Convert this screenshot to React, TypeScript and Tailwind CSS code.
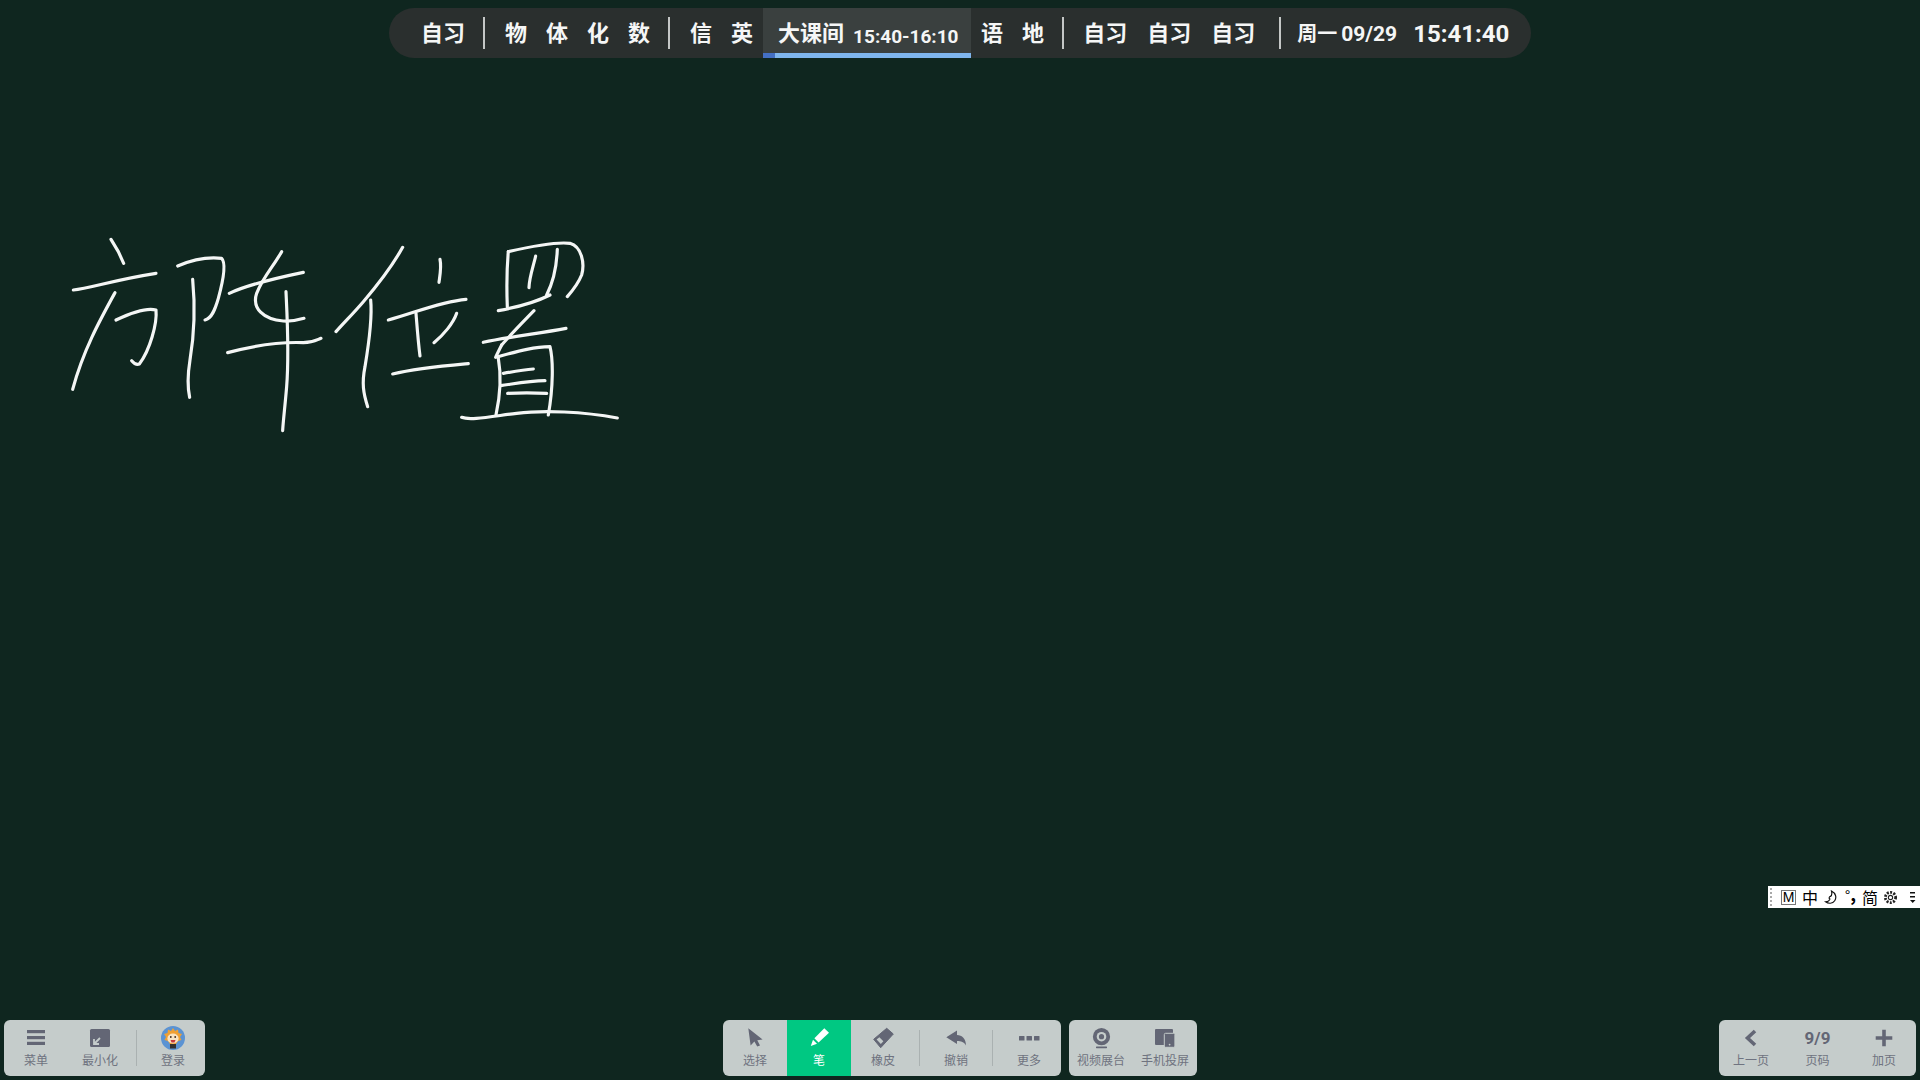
import type { ReactNode } from 'react'

const CJK = "font-['Roboto','Noto_Sans_CJK_SC',sans-serif]"
const INK = '#636675'

const strokes = [
  // 方
  'M183 58 L205 95 L221 130',
  'M70 210 C120 205 190 180 318 160',
  'M195 218 C150 300 100 390 68 508',
  'M198 300 C240 280 290 262 318 270 C322 310 300 390 268 432 C258 436 250 428 245 422',
  // 阵
  'M383 138 C420 122 470 110 515 115 C530 130 520 180 505 235 C495 270 485 295 465 300',
  'M428 178 C435 250 435 330 420 420 C412 470 412 500 419 532',
  'M695 95 C670 140 640 170 620 220 C605 265 640 298 700 303 C725 305 745 300 762 295',
  'M538 220 C580 200 650 180 760 157',
  'M533 398 C600 380 680 365 760 368 C790 368 800 360 813 355',
  'M708 215 C712 300 718 400 710 500 C705 560 700 600 698 632',
]

const strokes2 = [
  // 位
  'M218 82 C180 150 130 210 100 245 C70 280 40 310 18 335',
  'M122 240 C128 300 115 380 105 440 C95 490 100 520 113 560',
  'M330 118 C335 140 330 165 327 187',
  'M175 300 C250 280 330 245 408 238',
  'M258 280 C262 330 265 370 270 408',
  'M380 280 C370 310 340 345 312 368',
  'M188 462 C260 445 340 438 415 431',
  // 置
  'M535 95 C600 80 680 65 720 70 C755 80 765 130 755 165 C745 190 725 215 712 230',
  'M535 95 C530 150 530 210 532 260',
  'M505 272 C560 262 620 245 660 225',
  'M617 108 C610 140 598 170 597 203',
  'M682 88 C680 140 668 190 650 225',
  'M612 272 C585 300 550 335 515 375',
  'M460 367 C540 350 630 340 708 325',
  'M515 375 C505 395 500 405 497 412 C560 395 610 380 660 380 C670 420 670 500 655 585',
  'M505 415 C515 470 510 530 498 585',
  'M520 460 C550 455 580 450 610 447',
  'M512 497 C560 490 600 482 645 482',
  'M533 520 C570 518 610 518 650 520',
  'M395 592 C420 602 480 590 560 580 C640 570 760 575 862 594',
]

function Handwriting() {
  return (
    <svg className="absolute left-0 top-0" width="700" height="460" fill="none" stroke="#f4f6f5" strokeWidth="9.5" strokeLinecap="round" strokeLinejoin="round">
      <g transform="translate(50 220) scale(0.3333)">
        {strokes.map((d) => (
          <path key={d} d={d} />
        ))}
      </g>
      <g transform="translate(330 220) scale(0.3333)">
        {strokes2.map((d) => (
          <path key={d} d={d} />
        ))}
      </g>
    </svg>
  )
}

function Svg({ children }: { children: ReactNode }) {
  return (
    <svg width="24" height="24" viewBox="0 0 24 24" fill={INK}>
      {children}
    </svg>
  )
}

const icons = {
  menu: (
    <Svg>
      <rect x="3" y="4" width="18" height="3.2" />
      <rect x="3" y="10" width="18" height="3.2" />
      <rect x="3" y="15.8" width="18" height="3.2" />
    </Svg>
  ),
  minimize: (
    <Svg>
      <rect x="2" y="3" width="20" height="18" rx="1.5" />
      <path d="M12 12 L6.5 17.5 M6 13 V18 H11" fill="none" stroke="#c5cccb" strokeWidth="1.8" />
    </Svg>
  ),
  avatar: (
    <Svg>
      <circle cx="12" cy="12" r="12" fill="#5b93d3" />
      <path d="M12 2 L14 5 L17 3.5 L17.5 7 L21 8 L19 11 L20.5 14 L17 15 L15 18 H9 L7 15 L3.5 14 L5 11 L3 8 L6.5 7 L7 3.5 L10 5 Z" fill="#f0a033" />
      <ellipse cx="12" cy="12.5" rx="5.6" ry="5" fill="#f8e3c4" />
      <circle cx="9.8" cy="11" r="0.9" fill="#3c2a20" />
      <circle cx="14.2" cy="11" r="0.9" fill="#3c2a20" />
      <path d="M9.5 14 H14.5 L13.5 16.5 H10.5 Z" fill="#c8383a" />
      <rect x="9" y="18" width="6" height="4.5" fill="#33302e" />
    </Svg>
  ),
  select: (
    <Svg>
      <path d="M5.3 2.3 L19.6 13.4 L14.3 14.2 L17 19.6 L14.2 20.6 L11.4 15.4 L7.6 19.4 Z" />
    </Svg>
  ),
  pen: (
    <svg width="24" height="24" viewBox="0 0 24 24" fill="#fff">
      <path d="M7.4 12.2 L17.3 2.3 L22 6.7 L11.6 16.4 Z" />
      <path d="M6 13.8 L10 17.8 L3.8 20 Z" />
    </svg>
  ),
  eraser: (
    <Svg>
      <path d="M2.7 13.3 L15.7 2.3 L22.3 8 L9.7 21.7 Z" strokeLinejoin="round" stroke={INK} strokeWidth="1" />
      <path d="M5.6 13.6 L9.8 18 L12.4 15.2 L8.4 11.2 Z" fill="#c5cccb" />
    </Svg>
  ),
  undo: (
    <Svg>
      <path d="M2.3 11.3 L13 4.6 V9 C18 9 22 13 22 19.5 C20 16 17 15 13 15 V18 Z" />
    </Svg>
  ),
  more: (
    <Svg>
      <rect x="2" y="10" width="5.5" height="4.6" rx="0.6" />
      <rect x="9.5" y="10" width="5.5" height="4.6" rx="0.6" />
      <rect x="17" y="10" width="5.5" height="4.6" rx="0.6" />
    </Svg>
  ),
  camera: (
    <Svg>
      <circle cx="12.5" cy="10.7" r="8.6" />
      <circle cx="12.5" cy="10.7" r="4.8" fill="#c5cccb" />
      <circle cx="12.5" cy="10.7" r="2.6" />
      <rect x="7" y="20.4" width="11" height="1.8" rx="0.6" />
    </Svg>
  ),
  cast: (
    <Svg>
      <path d="M3 3 H19 A1 1 0 0 1 20 4 V19 H3 A1 1 0 0 1 2 18 V4 A1 1 0 0 1 3 3 Z" />
      <rect x="11.3" y="7.3" width="10.6" height="14" rx="1.2" stroke="#c5cccb" strokeWidth="1" />
      <circle cx="16.6" cy="18.6" r="0.9" fill="#c5cccb" />
    </Svg>
  ),
  prev: (
    <svg width="24" height="24" viewBox="0 0 24 24" fill="none" stroke={INK} strokeWidth="3.6">
      <path d="M16 5 L8.5 12 L16 19" />
    </svg>
  ),
  plus: (
    <svg width="24" height="24" viewBox="0 0 24 24" fill="none" stroke={INK} strokeWidth="3.6">
      <path d="M3.7 12 H20.3 M12 3.7 V20.3" />
    </svg>
  ),
}

function ToolItem({ icon, label, active }: { icon: ReactNode; label: string; active?: boolean }) {
  return (
    <div className={`flex h-full w-16 flex-col items-center pt-1.5 ${active ? 'bg-[#00c882] text-white' : 'text-[#6f7380]'}`}>
      <div className="flex h-6 items-center justify-center">{icon}</div>
      <span className="mt-[3px] text-xs leading-4">{label}</span>
    </div>
  )
}

function Divider() {
  return <div className="mx-1 h-9 w-px self-center bg-[#aab1b1]" />
}

function Panel({ className, children }: { className?: string; children: ReactNode }) {
  return <div className={`flex h-14 overflow-hidden rounded-md bg-[#c5cccb] ${className ?? ''}`}>{children}</div>
}

function BarDivider({ className }: { className: string }) {
  return <div className={`h-8 w-0.5 bg-[#c4c7c6] ${className}`} />
}

function TopBar() {
  return (
    <div className="flex justify-center pt-2">
      <div className={`flex h-[50px] w-[1142px] items-center rounded-[25px] bg-[#2a2f2e] pl-[32px] text-[22px] font-bold leading-none text-[#f5f6f6] ${CJK}`}>
        <span className="mt-0.5 w-11">自习</span>
        <BarDivider className="ml-[18px]" />
        <div className="ml-5 mt-0.5 flex gap-[19px]">
          <span>物</span>
          <span>体</span>
          <span>化</span>
          <span>数</span>
        </div>
        <BarDivider className="ml-[18px]" />
        <div className="ml-5 mt-0.5 flex gap-[19px]">
          <span>信</span>
          <span>英</span>
        </div>
        <div className="relative ml-[10px] flex h-full w-[208px] items-center bg-[#3a403f] pl-[15px]">
          <span className="mt-0.5">大课间</span>
          <span className="ml-[9px] mt-[6px] text-[19px]">15:40-16:10</span>
          <div className="absolute bottom-0 left-0 flex h-[5px] w-full">
            <div className="w-3 bg-[#4470c4]" />
            <div className="flex-1 bg-[#7fb6ee]" />
          </div>
        </div>
        <div className="ml-[10px] mt-0.5 flex gap-[19px]">
          <span>语</span>
          <span>地</span>
        </div>
        <BarDivider className="ml-[18px]" />
        <span className="ml-[19px] mt-0.5">自习</span>
        <span className="ml-5 mt-0.5">自习</span>
        <span className="ml-5 mt-0.5">自习</span>
        <BarDivider className="ml-6" />
        <span className="ml-4 mt-0.5 text-[20px]">周一</span>
        <span className="ml-1 mt-0.5 text-[21px]">09/29</span>
        <span className="ml-4 mt-0.5 text-[24px]">15:41:40</span>
      </div>
    </div>
  )
}

function ImeBar() {
  return (
    <div className="absolute right-0 top-[886px] flex h-[22px] w-[152px] items-center bg-white text-black font-['Noto_Sans_CJK_SC',sans-serif]">
      <div className="ml-0.5 h-[18px] w-[3px] border-l-2 border-dotted border-[#a9a9a9]" />
      <div className="ml-2 flex h-[15px] w-[15px] items-center justify-center border border-[#777] font-['Liberation_Sans',sans-serif] text-sm leading-none">
        M
      </div>
      <span className="ml-1.5 text-base leading-none">中</span>
      <svg className="ml-1.5" width="15" height="15" viewBox="0 0 14 14" fill="none" stroke="#111" strokeWidth="1.1">
        <path d="M7 1 C11 3 12 7 10 10 C8 13 4 13 1.5 11 C4 11 5 10 5.5 8.5 C4.5 8 4.5 6.5 6 6 C7.5 5 7.5 3 7 1 Z" />
      </svg>
      <span className="ml-1.5 -mt-1 text-sm leading-none">°</span>
      <span className="-mt-2 text-lg font-bold leading-none">,</span>
      <span className="ml-1.5 text-base leading-none">简</span>
      <svg className="ml-[5px]" width="15" height="15" viewBox="0 0 14 14" fill="none" stroke="#222" strokeWidth="1">
        <circle cx="7" cy="7" r="2" />
        <circle cx="7" cy="7" r="4.8" strokeWidth="2.6" strokeDasharray="1.8 1.3" />
      </svg>
      <svg className="ml-[11px]" width="8" height="14" viewBox="0 0 8 14" fill="#111">
        <rect x="1" y="2" width="5" height="1.5" />
        <rect x="1" y="6" width="5" height="1.5" />
        <path d="M1 10 H6.5 L3.7 13 Z" />
      </svg>
    </div>
  )
}

export default function App() {
  return (
    <div className={`relative flex h-screen w-full flex-col overflow-hidden bg-[#0f261f] ${CJK}`}>
      <TopBar />
      <Handwriting />
      <ImeBar />
      <div className="mt-auto grid grid-cols-[1fr_auto_1fr] px-1 pb-1">
        <Panel className="justify-self-start">
          <ToolItem icon={icons.menu} label="菜单" />
          <ToolItem icon={icons.minimize} label="最小化" />
          <Divider />
          <ToolItem icon={icons.avatar} label="登录" />
        </Panel>
        <div className="flex gap-2">
          <Panel>
            <ToolItem icon={icons.select} label="选择" />
            <ToolItem icon={icons.pen} label="笔" active />
            <ToolItem icon={icons.eraser} label="橡皮" />
            <Divider />
            <ToolItem icon={icons.undo} label="撤销" />
            <Divider />
            <ToolItem icon={icons.more} label="更多" />
          </Panel>
          <Panel>
            <ToolItem icon={icons.camera} label="视频展台" />
            <ToolItem icon={icons.cast} label="手机投屏" />
          </Panel>
        </div>
        <Panel className="justify-self-end gap-[2.5px]">
          <ToolItem icon={icons.prev} label="上一页" />
          <ToolItem icon={<span className="text-[17px] font-bold leading-none text-[#636675]">9/9</span>} label="页码" />
          <ToolItem icon={icons.plus} label="加页" />
        </Panel>
      </div>
    </div>
  )
}
